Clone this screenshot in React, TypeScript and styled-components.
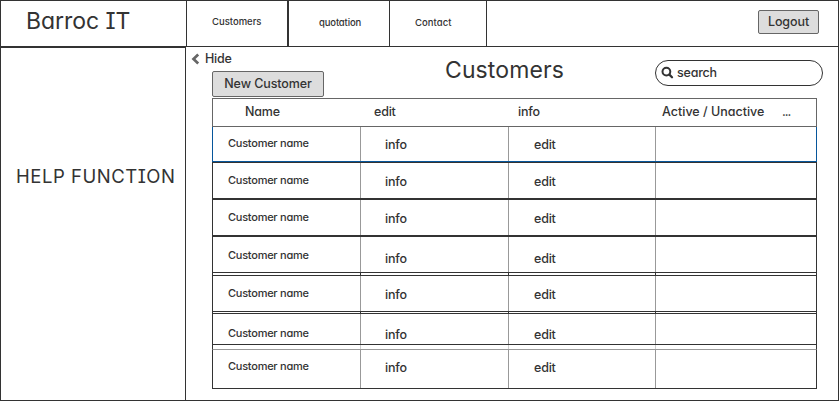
import React from 'react';
import styled, { createGlobalStyle } from 'styled-components';

const ink = '#333333';
const mid = '#666666';
const soft = '#999999';
const blue = '#07569b';

const GlobalStyle = createGlobalStyle`
  *, *::before, *::after { box-sizing: border-box; }
  body {
    margin: 0;
    background: #fff;
    color: ${ink};
    font-family: Inter, "Open Sans", sans-serif;
    font-size: 12.5px;
    font-weight: 500;
    line-height: 16px;
    letter-spacing: -0.2px;
    font-feature-settings: "cv11", "cv08";
  }
`;

const Window = styled.div`
  display: flex;
  flex-direction: column;
  width: 839px;
  height: 401px;
  border: 1px solid ${ink};
  background: #fff;
  white-space: nowrap;
  overflow: hidden;
`;

const TopBar = styled.header`
  display: flex;
  flex: none;
  height: 46px;
  border-bottom: 1px solid ${ink};
`;

const Brand = styled.div`
  width: 186px;
  padding: 6px 0 0 25px;
  border-right: 1px solid ${ink};
  font-size: 23px;
  font-weight: 400;
  line-height: 28px;
  letter-spacing: -0.05px;
`;

const Tab = styled.a<{ $width: number; $left: number; $top: number; $edge?: number; $spacing?: number }>`
  width: ${p => p.$width}px;
  padding: ${p => p.$top}px 0 0 ${p => p.$left}px;
  border-right: ${p => p.$edge ?? 1}px solid ${ink};
  font-size: 9.5px;
  line-height: 14px;
  letter-spacing: ${p => p.$spacing ?? 0}px;
`;

const Button = styled.button<{ $width: number; $height: number }>`
  flex: none;
  width: ${p => p.$width}px;
  height: ${p => p.$height}px;
  padding: 0 0 1px;
  border: 1px solid ${mid};
  border-radius: 2px;
  background: #dddddd;
  color: inherit;
  font: inherit;
  letter-spacing: -0.1px;
  font-feature-settings: inherit;
`;

const LogoutSlot = styled.div`
  margin: 9px 19px 0 auto;
`;

const Body = styled.div`
  display: flex;
  flex: 1;
  min-height: 0;
`;

const Sidebar = styled.aside`
  width: 185px;
  padding: 115px 0 0 15px;
  border-top: 1px solid ${ink};
  border-right: 1px solid ${ink};
  font-size: 18.5px;
  font-weight: 400;
  line-height: 26px;
  letter-spacing: 0.52px;
`;

const Main = styled.main`
  flex: 1;
  display: flex;
  flex-direction: column;
  padding-left: 26px;
`;

const Toolbar = styled.div`
  display: flex;
  align-items: flex-start;
  height: 51px;
`;

const Actions = styled.div`
  width: 233px;
`;

const HideLink = styled.a`
  display: flex;
  align-items: center;
  gap: 5px;
  height: 16px;
  margin: 4px 0 4px -21px;
`;

const Title = styled.h1`
  width: 210px;
  margin: 9px 0 0;
  font-size: 23px;
  font-weight: 400;
  line-height: 28px;
  letter-spacing: 0.1px;
`;

const SearchBox = styled.label`
  display: flex;
  align-items: center;
  gap: 3px;
  width: 168px;
  height: 26px;
  margin-top: 13px;
  padding: 0 0 1px 5px;
  border: 1px solid ${ink};
  border-radius: 13px;
`;

const Table = styled.div`
  width: 605px;
`;

const HeaderRow = styled.div`
  display: flex;
  height: 29px;
  padding: 5px 0 0 32px;
  border: 1px solid ${mid};
`;

const HeaderCell = styled.div<{ $width: number; $spacing?: number }>`
  width: ${p => p.$width}px;
  letter-spacing: ${p => p.$spacing ?? -0.2}px;
`;

type RowTone = 'selected' | 'normal' | 'last';

const sideColor = { selected: blue, normal: ink, last: ink };
const topColor = { selected: blue, normal: ink, last: soft };

const columns = '148px 148px 147px 1fr';

const Row = styled.div<{ $height: number; $tone: RowTone }>`
  display: grid;
  grid-template-columns: ${columns};
  height: ${p => p.$height}px;
  border: 1px solid ${p => sideColor[p.$tone]};
  border-top: ${p => (p.$tone === 'selected' ? 0 : 1)}px solid ${p => topColor[p.$tone]};
`;

const Cell = styled.div<{ $top?: number; $left?: number }>`
  padding: ${p => p.$top ?? 0}px 0 0 ${p => p.$left ?? 0}px;
  border-right: 1px solid ${soft};
  &:last-child { border-right: 0; }
`;

const NameCell = styled(Cell)`
  font-size: 11px;
  letter-spacing: -0.25px;
`;

const Gap = styled.div<{ $height: number; $line: string }>`
  display: grid;
  grid-template-columns: ${columns};
  height: ${p => p.$height}px;
  border: solid ${ink};
  border-width: 0 1px;
  > span { border-right: 1px solid ${p => p.$line}; }
`;

interface RowSpec {
  height: number;
  nameTop: number;
  linkTop: number;
  tone: RowTone;
  gap?: number;
  gapLine?: string;
}

const rows: RowSpec[] = [
  { height: 35, nameTop: 8, linkTop: 10, tone: 'selected' },
  { height: 37, nameTop: 9, linkTop: 11, tone: 'normal' },
  { height: 37, nameTop: 9, linkTop: 11, tone: 'normal' },
  { height: 37, nameTop: 10, linkTop: 14, tone: 'normal', gap: 2, gapLine: ink },
  { height: 37, nameTop: 9, linkTop: 11, tone: 'normal', gap: 1, gapLine: ink },
  { height: 32, nameTop: 11, linkTop: 13, tone: 'normal', gap: 4, gapLine: '#cccccc' },
  { height: 40, nameTop: 8, linkTop: 10, tone: 'last' },
];

const ChevronIcon = () => (
  <svg width="9" height="12" viewBox="0 0 9 12" fill="none">
    <path d="M7.2 1.5 2.5 6l4.7 4.5" stroke={mid} strokeWidth="2.7" />
  </svg>
);

const SearchIcon = () => (
  <svg width="13" height="13" viewBox="0 0 13 13" fill="none">
    <circle cx="5.4" cy="5.6" r="3.9" stroke={ink} strokeWidth="2" />
    <path d="m8.4 8.6 2.6 2.6" stroke={ink} strokeWidth="2.3" strokeLinecap="round" />
  </svg>
);

export default function App() {
  return (
    <>
      <GlobalStyle />
      <Window>
        <TopBar>
          <Brand>Barroc IT</Brand>
          <Tab $width={102} $left={25} $top={14} $edge={2}>Customers</Tab>
          <Tab $width={101} $left={30} $top={15} $spacing={-0.15}>quotation</Tab>
          <Tab $width={97} $left={25} $top={15} $spacing={0.05}>Contact</Tab>
          <LogoutSlot>
            <Button $width={61} $height={24}>Logout</Button>
          </LogoutSlot>
        </TopBar>
        <Body>
          <Sidebar>HELP FUNCTION</Sidebar>
          <Main>
            <Toolbar>
              <Actions>
                <HideLink><ChevronIcon />Hide</HideLink>
                <Button $width={112} $height={26}>New Customer</Button>
              </Actions>
              <Title>Customers</Title>
              <SearchBox><SearchIcon />search</SearchBox>
            </Toolbar>
            <Table>
              <HeaderRow>
                <HeaderCell $width={129}>Name</HeaderCell>
                <HeaderCell $width={144}>edit</HeaderCell>
                <HeaderCell $width={144}>info</HeaderCell>
                <HeaderCell $width={120} $spacing={0}>Active / Unactive</HeaderCell>
                <HeaderCell $width={20} $spacing={-1}>...</HeaderCell>
              </HeaderRow>
              {rows.map((row, i) => (
                <React.Fragment key={i}>
                  <Row $height={row.height} $tone={row.tone}>
                    <NameCell $top={row.nameTop} $left={15}>Customer name</NameCell>
                    <Cell $top={row.linkTop} $left={24}>info</Cell>
                    <Cell $top={row.linkTop} $left={25}>edit</Cell>
                    <Cell />
                  </Row>
                  {row.gap && (
                    <Gap $height={row.gap} $line={row.gapLine ?? soft}>
                      <span /><span /><span />
                    </Gap>
                  )}
                </React.Fragment>
              ))}
            </Table>
          </Main>
        </Body>
      </Window>
    </>
  );
}
